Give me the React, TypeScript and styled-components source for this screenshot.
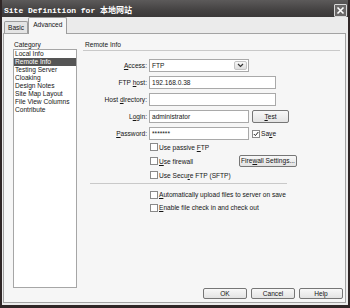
import React from 'react';
import styled, { createGlobalStyle } from 'styled-components';

const GlobalStyle = createGlobalStyle`
  html, body {
    margin: 0;
    padding: 0;
    background: #fff;
  }
  body {
    font-family: "Liberation Sans", Arial, sans-serif;
    font-size: 6.6px;
    color: #151515;
  }
  * {
    box-sizing: border-box;
  }
`;

const Window = styled.div`
  width: 350px;
  height: 308px;
  display: flex;
  flex-direction: column;
  background: #ececec;
  border: 2px solid #2f2626;
  border-top: none;
  border-bottom-width: 3px;
`;

const TitleBar = styled.div`
  height: 17px;
  flex: none;
  display: flex;
  align-items: center;
  justify-content: space-between;
  padding: 1px 1px 0 2px;
  background: linear-gradient(#5c5a5a, #444242 60%, #3a3838);
  color: #fff;
  font-family: "Liberation Mono", "Noto Sans CJK SC", monospace;
  font-weight: bold;
  font-size: 8px;
  white-space: nowrap;
`;

const CloseBox = styled.div`
  width: 13px;
  height: 13px;
  margin-top: 2px;
  border: 1px solid #d8d8d8;
  border-radius: 1px;
  background: #6a6868;
  display: flex;
  align-items: center;
  justify-content: center;
`;

const TabStrip = styled.div`
  height: 16px;
  flex: none;
  display: flex;
  align-items: flex-end;
  padding-left: 2px;
  background: #ebebeb;
`;

const Tab = styled.div<{ $active?: boolean }>`
  position: relative;
  z-index: ${(p) => (p.$active ? 1 : 0)};
  height: ${(p) => (p.$active ? 17 : 12)}px;
  margin-bottom: ${(p) => (p.$active ? -1 : 0)}px;
  padding: ${(p) => (p.$active ? '3px 4px 0' : '1px 3px 0')};
  border: 1px solid #9c9c9c;
  border-bottom: none;
  border-radius: 2px 2px 0 0;
  background: ${(p) => (p.$active ? '#f6f6f6' : '#e4e4e4')};
  line-height: 8px;
  display: flex;
  align-items: ${(p) => (p.$active ? 'flex-start' : 'center')};
`;

const Panel = styled.div`
  flex: 1;
  margin: 0 2px 2px 1px;
  border: 1px solid #a3a3a3;
  background: #f6f6f6;
  padding: 7px 2px 3px 9px;
  display: flex;
  flex-direction: column;
`;

const Content = styled.div`
  flex: 1;
  display: flex;
  gap: 6px;
`;

const LeftColumn = styled.div`
  width: 64px;
  flex: none;
  display: flex;
  flex-direction: column;
`;

const Caption = styled.div<{ $indent?: number }>`
  height: 8px;
  line-height: 8px;
  padding-left: ${(p) => p.$indent ?? 1}px;
  white-space: nowrap;
`;

const ListBox = styled.div`
  height: 239px;
  border: 1px solid #a6a6a6;
  background: #fff;
`;

const ListItem = styled.div<{ $selected?: boolean }>`
  height: 8px;
  line-height: 8px;
  padding-left: 1px;
  white-space: nowrap;
  background: ${(p) => (p.$selected ? '#555' : 'transparent')};
  color: ${(p) => (p.$selected ? '#fff' : '#151515')};
`;

const RightColumn = styled.div`
  flex: 1;
  display: flex;
  flex-direction: column;
`;

const Rule = styled.div<{ $width?: number; $left?: number }>`
  height: 1px;
  background: #c9c9c9;
  margin-left: ${(p) => p.$left ?? 0}px;
  width: ${(p) => (p.$width ? `${p.$width}px` : 'auto')};
`;

const HeaderRule = styled(Rule)`
  margin-top: 1px;
  margin-right: 3px;
`;

const Form = styled.div`
  margin-top: 8px;
  display: grid;
  grid-template-columns: 64px auto;
  grid-auto-rows: 13px;
  column-gap: 2px;
  row-gap: 4px;
`;

const FieldLabel = styled.label`
  display: flex;
  align-items: center;
  justify-content: flex-end;
  white-space: nowrap;
`;

const FieldCell = styled.div`
  display: flex;
  align-items: center;
`;

const TextBox = styled.div<{ $width: number }>`
  width: ${(p) => p.$width}px;
  height: 13px;
  border: 1px solid #a9a9a9;
  background: #fff;
  padding-left: 2px;
  line-height: 11px;
  white-space: nowrap;
  overflow: hidden;
`;

const SelectBox = styled.div`
  width: 100px;
  height: 13px;
  border: 1px solid #a9a9a9;
  background: #fff;
  display: flex;
  align-items: stretch;
`;

const SelectText = styled.div`
  flex: 1;
  padding-left: 2px;
  line-height: 11px;
`;

const SelectArrow = styled.div`
  width: 13px;
  margin: 1px;
  border: 1px solid #c4c4c4;
  border-radius: 2px;
  background: linear-gradient(#f7f7f7, #dedede);
  display: flex;
  align-items: center;
  justify-content: center;
`;

const PushButton = styled.button<{ $width: number; $height?: number }>`
  width: ${(p) => p.$width}px;
  height: ${(p) => p.$height ?? 11}px;
  padding: 0;
  border: 1px solid #767676;
  border-radius: 2px;
  background: linear-gradient(#f8f8f8, #e3e3e3);
  font-family: "Liberation Sans", Arial, sans-serif;
  font-size: 6.6px;
  color: #151515;
  line-height: 8px;
  white-space: nowrap;
`;

const Box = styled.span`
  width: 8px;
  height: 8px;
  flex: none;
  border: 1px solid #8a8a8a;
  background: #fff;
  display: flex;
  align-items: center;
  justify-content: center;
`;

const Check = styled.label<{ $gap?: number }>`
  display: flex;
  align-items: center;
  gap: 1px;
  white-space: nowrap;
  margin-left: ${(p) => p.$gap ?? 0}px;
`;

const CheckGroup = styled.div<{ $row: number; $top?: number }>`
  margin-left: 67px;
  margin-top: ${(p) => p.$top ?? 0}px;
  display: grid;
  grid-auto-rows: ${(p) => p.$row}px;
`;

const CheckRow = styled.div`
  display: flex;
  align-items: center;
`;

const CheckCell = styled.div`
  width: 89px;
  flex: none;
`;

const ButtonRow = styled.div`
  height: 11px;
  display: flex;
  justify-content: flex-end;
  gap: 4px;
`;

const CloseIcon = () => (
  <svg width="9" height="9" viewBox="0 0 9 9">
    <path d="M1.5 1.5 L7.5 7.5 M7.5 1.5 L1.5 7.5" stroke="#fff" strokeWidth="1.6" />
  </svg>
);

const ChevronIcon = () => (
  <svg width="7" height="5" viewBox="0 0 7 5">
    <path d="M1 1 L3.5 3.5 L6 1" stroke="#333" strokeWidth="1.2" fill="none" />
  </svg>
);

const TickIcon = () => (
  <svg width="6" height="6" viewBox="0 0 6 6">
    <path d="M0.8 3 L2.4 4.6 L5.3 1" stroke="#222" strokeWidth="1" fill="none" />
  </svg>
);

const CheckOption = ({ checked, children, gap }: { checked?: boolean; children: React.ReactNode; gap?: number }) => (
  <Check $gap={gap}>
    <Box>{checked && <TickIcon />}</Box>
    <span>{children}</span>
  </Check>
);

const categories = [
  'Local Info',
  'Remote Info',
  'Testing Server',
  'Cloaking',
  'Design Notes',
  'Site Map Layout',
  'File View Columns',
  'Contribute',
];

export default function App() {
  return (
    <>
      <GlobalStyle />
      <Window>
        <TitleBar>
          <span>Site Definition for 本地网站</span>
          <CloseBox>
            <CloseIcon />
          </CloseBox>
        </TitleBar>
        <TabStrip>
          <Tab>Basic</Tab>
          <Tab $active>Advanced</Tab>
        </TabStrip>
        <Panel>
          <Content>
            <LeftColumn>
              <Caption>Category</Caption>
              <ListBox>
                {categories.map((c) => (
                  <ListItem key={c} $selected={c === 'Remote Info'}>
                    {c}
                  </ListItem>
                ))}
              </ListBox>
            </LeftColumn>
            <RightColumn>
              <Caption $indent={2}>Remote Info</Caption>
              <HeaderRule />
              <Form>
                <FieldLabel>
                  <span>
                    <u>A</u>ccess:
                  </span>
                </FieldLabel>
                <FieldCell>
                  <SelectBox>
                    <SelectText>FTP</SelectText>
                    <SelectArrow>
                      <ChevronIcon />
                    </SelectArrow>
                  </SelectBox>
                </FieldCell>

                <FieldLabel>
                  <span>
                    FTP <u>h</u>ost:
                  </span>
                </FieldLabel>
                <FieldCell>
                  <TextBox $width={127}>192.168.0.38</TextBox>
                </FieldCell>

                <FieldLabel>
                  <span>
                    Host <u>d</u>irectory:
                  </span>
                </FieldLabel>
                <FieldCell>
                  <TextBox $width={127} />
                </FieldCell>

                <FieldLabel>
                  <span>
                    L<u>o</u>gin:
                  </span>
                </FieldLabel>
                <FieldCell>
                  <TextBox $width={100}>administrator</TextBox>
                  <PushButton $width={37} $height={13} style={{ marginLeft: 3 }}>
                    <u>T</u>est
                  </PushButton>
                </FieldCell>

                <FieldLabel>
                  <span>
                    <u>P</u>assword:
                  </span>
                </FieldLabel>
                <FieldCell>
                  <TextBox $width={100}>*******</TextBox>
                  <CheckOption checked gap={3}>
                    Sa<u>v</u>e
                  </CheckOption>
                </FieldCell>
              </Form>

              <CheckGroup $row={14}>
                <CheckRow>
                  <CheckOption>
                    Use passive <u>F</u>TP
                  </CheckOption>
                </CheckRow>
                <CheckRow>
                  <CheckCell>
                    <CheckOption>
                      <u>U</u>se firewall
                    </CheckOption>
                  </CheckCell>
                  <PushButton $width={58} $height={12}>
                    Fire<u>w</u>all Settings...
                  </PushButton>
                </CheckRow>
                <CheckRow>
                  <CheckOption>
                    Use Secu<u>r</u>e FTP (SFTP)
                  </CheckOption>
                </CheckRow>
              </CheckGroup>

              <Rule $width={197} $left={7} style={{ marginTop: 1 }} />

              <CheckGroup $row={13} $top={4}>
                <CheckRow>
                  <CheckOption>
                    <u>A</u>utomatically upload files to server on save
                  </CheckOption>
                </CheckRow>
                <CheckRow>
                  <CheckOption>
                    <u>E</u>nable file check in and check out
                  </CheckOption>
                </CheckRow>
              </CheckGroup>
            </RightColumn>
          </Content>
          <ButtonRow>
            <PushButton $width={44}>OK</PushButton>
            <PushButton $width={44}>Cancel</PushButton>
            <PushButton $width={44}>Help</PushButton>
          </ButtonRow>
        </Panel>
      </Window>
    </>
  );
}
